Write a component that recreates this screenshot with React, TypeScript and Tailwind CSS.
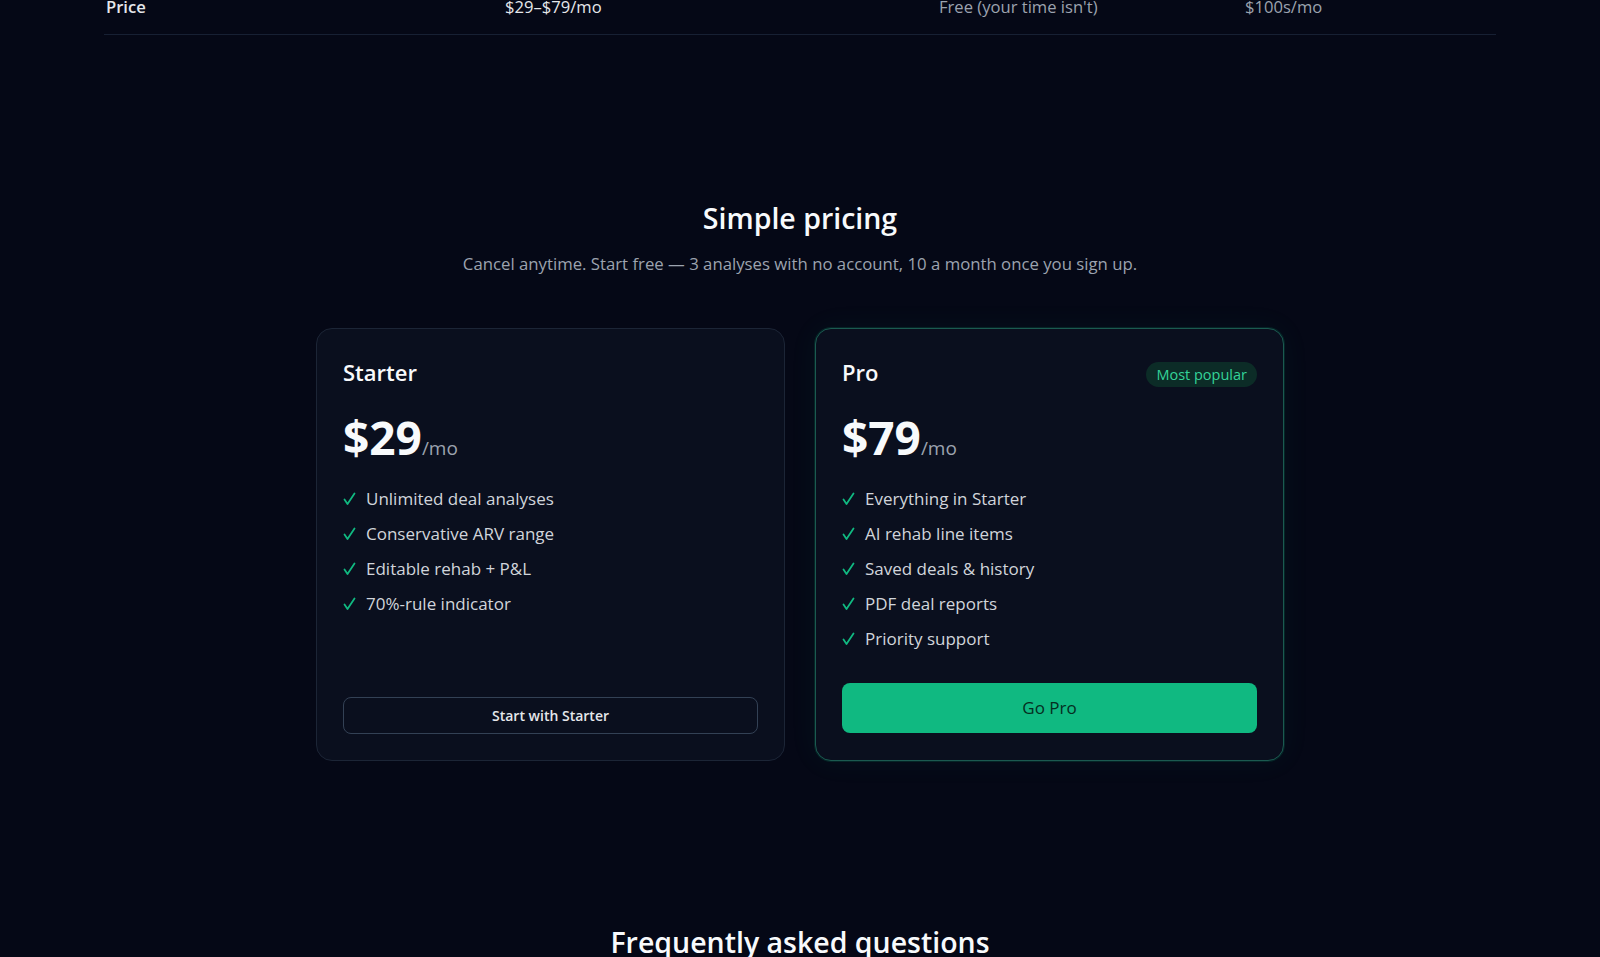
import React from "react";

const Check = () => (
  <svg width="13" height="14" viewBox="0 0 13 14" fill="none" className="shrink-0">
    <path d="M1.5 7.5 L4.5 12 L11.5 1.5" stroke="#10b981" strokeWidth="1.8" strokeLinecap="round" strokeLinejoin="round" />
  </svg>
);

const Feature = ({ children }: { children: React.ReactNode }) => (
  <li className="flex items-center gap-[10px] text-[17px] leading-7 text-[#d1d5db]">
    <Check />
    <span>{children}</span>
  </li>
);

export default function App() {
  return (
    <div
      className="min-h-screen bg-[#050816] text-white overflow-hidden"
      style={{ fontFamily: '"Open Sans", "Noto Sans", sans-serif' }}
    >
      {/* comparison table tail */}
      <div className="mx-auto w-[1392px] -mt-[5px]">
        <div className="grid grid-cols-[401px_434px_306px_251px] border-b border-[#172033] pb-[15px] text-[16.6px] leading-6">
          <div className="pl-[2px] font-semibold text-[#e5e7eb]">Price</div>
          <div className="text-[#e5e7eb]">$29–$79/mo</div>
          <div className="text-[#9ca3af]">Free (your time isn't)</div>
          <div className="text-[#9ca3af]">$100s/mo</div>
        </div>
      </div>

      {/* pricing */}
      <section className="pt-[165px] flex flex-col items-center">
        <h2 className="text-[28.5px] leading-9 font-semibold text-[#f8fafc]">Simple pricing</h2>
        <p className="mt-[14px] text-[16.75px] leading-7 text-[#9ca3af]">
          Cancel anytime. Start free — 3 analyses with no account, 10 a month once you sign up.
        </p>

        <div className="mt-[50px] grid w-[968px] grid-cols-2 gap-[30px]">
          {/* Starter */}
          <div className="flex flex-col rounded-2xl border border-[#1c2536] bg-[#0a0f1e] px-[26px] pt-[28px] pb-[26px]">
            <h3 className="text-[22px] leading-[30px] font-semibold text-[#f8fafc]">Starter</h3>
            <div className="mt-[27px] flex items-baseline">
              <span className="text-[46px] leading-none font-bold text-[#f8fafc]">$29</span>
              <span className="text-[19px] text-[#9ca3af]">/mo</span>
            </div>
            <ul className="mt-[22px] flex flex-col gap-[7px]">
              <Feature>Unlimited deal analyses</Feature>
              <Feature>Conservative ARV range</Feature>
              <Feature>Editable rehab + P&amp;L</Feature>
              <Feature>70%-rule indicator</Feature>
            </ul>
            <button className="mt-auto h-[37px] w-full rounded-lg border border-[#334155] bg-transparent text-[14px] font-semibold text-[#e5e7eb]">
              Start with Starter
            </button>
          </div>

          {/* Pro */}
          <div className="flex flex-col rounded-2xl border border-[#1b5a50] bg-[#0a0f1e] px-[26px] pt-[28px] pb-[27px] shadow-[0_0_0_1px_rgba(16,185,129,0.14),0_0_30px_rgba(16,185,129,0.06)]">
            <div className="flex items-start justify-between">
              <h3 className="text-[22px] leading-[30px] font-semibold text-[#f8fafc]">Pro</h3>
              <span className="mt-[5px] rounded-full bg-[#0c2c27] px-[10px] py-[2px] text-[14.5px] leading-[21px] text-[#34d399]">
                Most popular
              </span>
            </div>
            <div className="mt-[27px] flex items-baseline">
              <span className="text-[46px] leading-none font-bold text-[#f8fafc]">$79</span>
              <span className="text-[19px] text-[#9ca3af]">/mo</span>
            </div>
            <ul className="mt-[22px] flex flex-col gap-[7px]">
              <Feature>Everything in Starter</Feature>
              <Feature>AI rehab line items</Feature>
              <Feature>Saved deals &amp; history</Feature>
              <Feature>PDF deal reports</Feature>
              <Feature>Priority support</Feature>
            </ul>
            <button className="mt-[30px] h-[50px] w-full rounded-lg bg-[#10b981] text-[17px] text-[#052e1f]">
              Go Pro
            </button>
          </div>
        </div>
      </section>

      {/* FAQ */}
      <section className="mt-[163px] flex flex-col items-center">
        <h2 className="text-[28.5px] leading-9 font-semibold text-[#f8fafc]">Frequently asked questions</h2>
        <div className="h-40" />
      </section>
    </div>
  );
}
